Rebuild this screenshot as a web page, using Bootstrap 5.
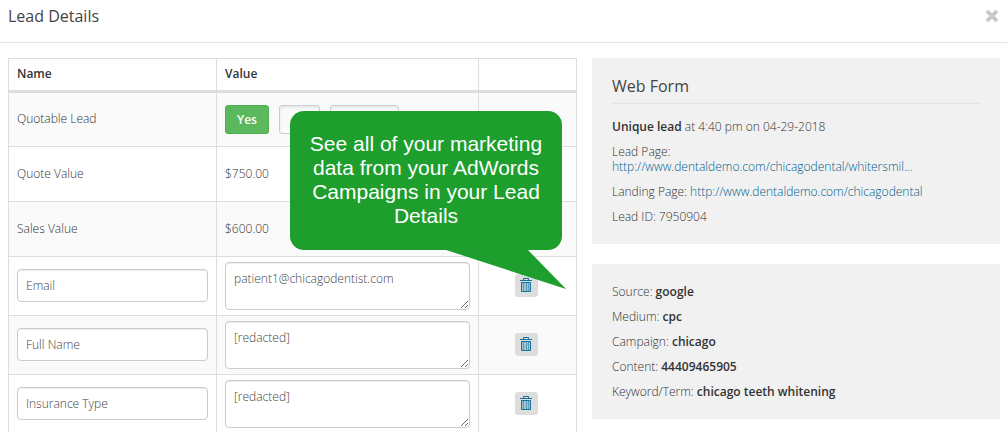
<!DOCTYPE html>
<html lang="en">
<head>
<meta charset="utf-8">
<meta name="viewport" content="width=device-width, initial-scale=1">
<title>Lead Details</title>
<link href="https://cdn.jsdelivr.net/npm/bootstrap@5.3.0/dist/css/bootstrap.min.css" rel="stylesheet">
<style>
  body { font-family: "Open Sans", "Noto Sans", sans-serif; font-size: 12px; font-weight: 300; line-height: 15px; color: #333; background: #fff; }
  .lead-header { height: 43px; padding: 0 8px 10px; border-bottom: 1px solid #e3e3e3; }
  .lead-title, .panel-title { font-size: 16px; line-height: 20px; margin: 0; font-weight: 400; color: #444; }
  .lead-close { border: 0; background: none; padding: 0; line-height: 0; }
  .lead-body { padding: 15px 7px 0 8px; gap: 15px; }
  .fields-pane { flex: 569 1 0; min-width: 0; }
  .info-pane { flex: 408 1 0; min-width: 0; gap: 20px; }

  .fields-table { table-layout: fixed; margin: 0; border-color: #ddd; }
  .fields-table th, .fields-table td { padding: 5px 8px 7px; border: 1px solid #ddd; height: 55px; vertical-align: middle; color: #333; }
  .fields-table thead th { height: 33px; font-weight: 600; border-bottom: 3px solid #ddd; }
  .fields-table tbody tr:nth-child(odd) > td { background: #fafafa; }
  .fields-table tbody tr.custom-field > td { height: 59px; }
  .fields-table td.wide-cell { padding: 5px 8px; }
  .fields-table td.tools-cell { padding-right: 11px; }
  .col-name { width: 208px; }
  .col-tools { width: 98px; }

  .choice-row { gap: 10px; }
  .choice { height: 29px; padding: 0; border: 1px solid #ccc; border-radius: 3px; background: #fafafa; box-shadow: inset 0 2px 3px #e6e9e9; }
  .choice-yes { width: 44px; background: #5cb85c; border-color: #4cae4c; color: #fff; font-size: 12px; font-weight: 600; line-height: 15px; box-shadow: none; }
  .choice-no { width: 41px; }
  .choice-unset { width: 69px; }

  .field-box { font-size: 12px; font-weight: 300; line-height: 15px; color: #444; padding: 8px; border: 1px solid #ccc; border-radius: 4px; box-shadow: inset 0 1px 1px rgba(0,0,0,.075); }
  input.field-box { height: 33px; }
  textarea.field-box { height: 48px; min-height: 48px; display: block; overflow: hidden; }
  .trash { width: 23px; height: 23px; padding: 0; border: 0; border-radius: 3px; background: #ddd; line-height: 0; }

  .callout { right: 15px; top: 53px; width: 272px; padding: 21px 16px 22px; border-radius: 14px; background: #1e9e2d; color: #fff; font: 21px/24px "Liberation Sans", Arial, sans-serif; }
  .callout-tail { top: 100%; right: -4px; margin-top: -1px; }

  .info-panel { background: #f1f1f1; padding: 20px 20px 10px; }
  .info-panel p { margin: 0 0 10px; }
  .info-panel b { font-weight: 600; }
  .info-panel a { color: #00608f; text-decoration: none; }
  .form-panel { padding-top: 18px; }
  .panel-title { padding: 0 0 7px; margin-bottom: 15px; border-bottom: 1px solid #e3e3e3; }
</style>
</head>
<body>
<header class="lead-header d-flex justify-content-between align-items-center">
  <h1 class="lead-title">Lead Details</h1>
  <button class="lead-close" type="button" aria-label="Close">
    <svg width="14" height="14" viewBox="0 0 14 14"><path d="M2 2l10 10M12 2l-10 10" stroke="#c8c8c8" stroke-width="3.8"/></svg>
  </button>
</header>
<main class="lead-body d-flex align-items-start">
  <section class="fields-pane position-relative">
    <table class="table fields-table">
      <colgroup><col class="col-name"><col><col class="col-tools"></colgroup>
      <thead><tr><th>Name</th><th>Value</th><th></th></tr></thead>
      <tbody>
        <tr>
          <td>Quotable Lead</td>
          <td class="wide-cell"><div class="d-flex choice-row">
            <button class="choice choice-yes" type="button">Yes</button>
            <button class="choice choice-no" type="button" aria-label="No"></button>
            <button class="choice choice-unset" type="button" aria-label="Not set"></button>
          </div></td>
          <td></td>
        </tr>
        <tr><td>Quote Value</td><td>$750.00</td><td></td></tr>
        <tr><td>Sales Value</td><td>$600.00</td><td></td></tr>
        <tr class="custom-field">
          <td><input class="form-control field-box" type="text" value="Email" aria-label="Field name"></td>
          <td class="wide-cell"><textarea class="form-control field-box" aria-label="Email">patient1@chicagodentist.com</textarea></td>
          <td class="text-center tools-cell"><button class="trash" type="button" aria-label="Delete Email"><svg width="12" height="14" viewBox="0 0 12 14"><path d="M1.5 4h9v9.5h-9z" fill="#a5c2cf"/><path d="M0 2.5h12M3.5 2V.5h5V2M1.5 4v9.5h9V4.5h-9" fill="none" stroke="#1272a0"/><path d="M3.5 5v8M6.500 5v8M8.500 5v8" stroke="#5c9ab8"/></svg></button></td>
        </tr>
        <tr class="custom-field">
          <td><input class="form-control field-box" type="text" value="Full Name" aria-label="Field name"></td>
          <td class="wide-cell"><textarea class="form-control field-box" aria-label="Full Name">[redacted]</textarea></td>
          <td class="text-center tools-cell"><button class="trash" type="button" aria-label="Delete Full Name"><svg width="12" height="14" viewBox="0 0 12 14"><path d="M1.5 4h9v9.5h-9z" fill="#a5c2cf"/><path d="M0 2.5h12M3.5 2V.5h5V2M1.5 4v9.5h9V4.5h-9" fill="none" stroke="#1272a0"/><path d="M3.5 5v8M6.500 5v8M8.500 5v8" stroke="#5c9ab8"/></svg></button></td>
        </tr>
        <tr class="custom-field">
          <td><input class="form-control field-box" type="text" value="Insurance Type" aria-label="Field name"></td>
          <td class="wide-cell"><textarea class="form-control field-box" aria-label="Insurance Type">[redacted]</textarea></td>
          <td class="text-center tools-cell"><button class="trash" type="button" aria-label="Delete Insurance Type"><svg width="12" height="14" viewBox="0 0 12 14"><path d="M1.5 4h9v9.5h-9z" fill="#a5c2cf"/><path d="M0 2.5h12M3.5 2V.5h5V2M1.5 4v9.5h9V4.5h-9" fill="none" stroke="#1272a0"/><path d="M3.5 5v8M6.500 5v8M8.500 5v8" stroke="#5c9ab8"/></svg></button></td>
        </tr>
      </tbody>
    </table>
    <div class="callout position-absolute text-center">
      See all of your marketing data from your AdWords Campaigns in your Lead Details
      <svg class="callout-tail position-absolute" width="123" height="41" viewBox="0 0 123 41"><path d="M0 0h84l39 40z" fill="#1e9e2d"/></svg>
    </div>
  </section>
  <aside class="info-pane d-grid">
    <section class="info-panel form-panel">
      <h2 class="panel-title">Web Form</h2>
      <p><b>Unique lead</b> at 4:40 pm on 04-29-2018</p>
      <p>Lead Page:<br><a href="#">http://www.dentaldemo.com/chicagodental/whitersmil...</a></p>
      <p>Landing Page: <a href="#">http://www.dentaldemo.com/chicagodental</a></p>
      <p>Lead ID: 7950904</p>
    </section>
    <section class="info-panel">
      <p>Source: <b>google</b></p>
      <p>Medium: <b>cpc</b></p>
      <p>Campaign: <b>chicago</b></p>
      <p>Content: <b>44409465905</b></p>
      <p>Keyword/Term: <b>chicago teeth whitening</b></p>
    </section>
  </aside>
</main>
<script src="https://cdn.jsdelivr.net/npm/bootstrap@5.3.0/dist/js/bootstrap.bundle.min.js"></script>
</body>
</html>
